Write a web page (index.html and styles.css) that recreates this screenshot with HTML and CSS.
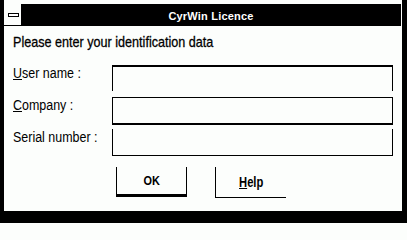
FILE: index.html
```html
<!DOCTYPE html>
<html lang="en">
<head>
<meta charset="utf-8">
<title>CyrWin Licence</title>
<link rel="stylesheet" href="styles.css">
</head>
<body>
<div class="window">
  <div class="titlebar">
    <div class="sysmenu"><div class="sysbar"></div></div>
    <div class="caption">CyrWin Licence</div>
  </div>
  <div class="content">
    <p class="prompt"><span class="cond">Please enter your identification data</span></p>
    <div class="form">
      <label class="lbl"><span class="cond"><u>U</u>ser name :</span></label>
      <div class="field f1"></div>
      <label class="lbl"><span class="cond"><u>C</u>ompany :</span></label>
      <div class="field f2"></div>
      <label class="lbl"><span class="cond">Serial number :</span></label>
      <div class="field f3"></div>
    </div>
    <div class="buttons">
      <div class="btn ok"><span class="cond mid">OK</span></div>
      <div class="btn help"><span class="cond mid"><u>H</u>elp</span></div>
    </div>
  </div>
</div>
</body>
</html>
```
FILE: styles.css
```css
html, body {
  margin: 0;
  height: 100%;
}
body {
  background: #fcfefc;
  color: #000;
  font-family: "Liberation Sans", Arial, sans-serif;
  overflow: hidden;
}
.window {
  box-sizing: border-box;
  width: 407px;
  height: 223px;
  border-left: 4px solid #000;
  border-right: 5px solid #000;
  border-bottom: 12px solid #000;
  padding-top: 4px;
}
.titlebar {
  display: flex;
  height: 22px;
  margin-right: 1px;
}
.sysmenu {
  width: 17px;
  box-sizing: border-box;
  border-bottom: 1px solid #000;
  display: flex;
  align-items: center;
  padding-left: 4px;
}
.sysbar {
  width: 11px;
  height: 4px;
  box-sizing: border-box;
  border: 1px solid #000;
  background: #fff;
}
.caption {
  flex: 1;
  background: #000;
  color: #fff;
  font-weight: bold;
  font-size: 11px;
  letter-spacing: 0.2px;
  display: flex;
  align-items: center;
  justify-content: center;
  padding-top: 1px;
}
.content {
  padding: 7px 0 0 9px;
}
.prompt {
  margin: 0;
  font-size: 15px;
  line-height: 17px;
  height: 17px;
  -webkit-text-stroke: 0.3px #000;
}
.cond {
  display: inline-block;
  white-space: nowrap;
  transform: scaleX(0.84);
  transform-origin: 0 50%;
}
.cond.mid {
  transform-origin: 50% 50%;
}
.form {
  margin-top: 15px;
  display: grid;
  grid-template-columns: 99px 281px;
  grid-template-rows: 32px 32px 27px;
}
.lbl {
  font-size: 14px;
  line-height: 16px;
}
.lbl .cond {
  transform: scaleX(0.89);
}
.field {
  box-sizing: border-box;
  border-left: 1px solid #000;
  border-right: 1px solid #000;
}
.f1 {
  height: 26px;
  border-top: 2px solid #000;
}
.f2 {
  height: 28px;
  border-top: 1px solid #000;
  border-bottom: 2px solid #000;
}
.f3 {
  height: 27px;
  border-bottom: 1px solid #000;
}
.buttons {
  display: flex;
  gap: 28px;
  margin-top: 11px;
  padding-left: 103px;
}
.btn {
  width: 71px;
  box-sizing: border-box;
  display: flex;
  align-items: center;
  justify-content: center;
  font-weight: bold;
}
.ok {
  height: 30px;
  border-left: 1px solid #000;
  border-right: 1px solid #000;
  border-bottom: 3px solid #000;
  font-size: 13px;
}
.help {
  height: 31px;
  border-left: 1px solid #000;
  border-bottom: 1px solid #000;
  font-size: 14px;
}
.help .cond {
  transform: scaleX(0.8);
}
```
